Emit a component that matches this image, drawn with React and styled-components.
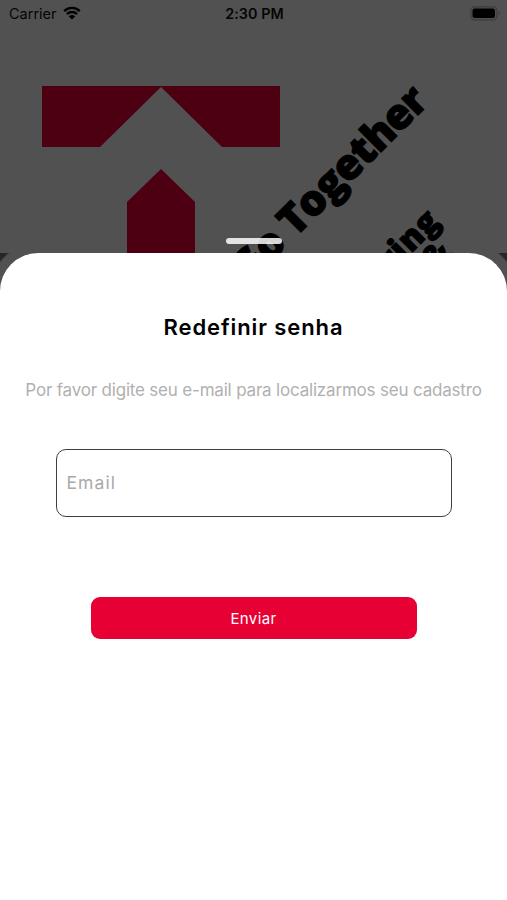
import React from 'react'
import styled, { createGlobalStyle } from 'styled-components'

const App = () => {
    return (
        <>
        <GlobalStyle/>
        <Screen>
            <Backdrop>
                <StatusBar>
                    <Carrier>
                        <StatusText $spacing='0'>Carrier</StatusText>
                        <WifiIcon/>
                    </Carrier>
                    <StatusText $bold $spacing='0.1px'>2:30 PM</StatusText>
                    <StatusRight><BatteryIcon/></StatusRight>
                </StatusBar>
                <Logo/>
                <Handle/>
            </Backdrop>
            <SheetWrapper>
                <Sheet>
                    <Title>Redefinir senha</Title>
                    <Description>Por favor digite seu e-mail para localizarmos seu cadastro</Description>
                    <EmailInput type='email' placeholder='Email'/>
                    <SendButton type='button'>Enviar</SendButton>
                </Sheet>
            </SheetWrapper>
        </Screen>
        </>
    )
}

const WifiIcon = () => (
    <svg width='18' height='14' viewBox='0 0 18 14'>
        <path d='M1.2 5.1 A11.2 11.2 0 0 1 16.8 5.1' fill='none' stroke='#000' strokeWidth='2.3'/>
        <path d='M3.9 8.1 A7.3 7.3 0 0 1 14.1 8.1' fill='none' stroke='#000' strokeWidth='2.3'/>
        <path d='M9 13.6 L5.9 10.4 A4.4 4.4 0 0 1 12.1 10.4 Z' fill='#000'/>
    </svg>
)

const BatteryIcon = () => (
    <svg width='31' height='15' viewBox='0 0 31 15'>
        <rect x='0.9' y='0.9' width='26' height='13' rx='3.6' fill='none' stroke='#3c3c3c' strokeWidth='1.1'/>
        <rect x='2.5' y='2.6' width='22.5' height='9.4' rx='2' fill='#000'/>
        <path d='M28.6 5 Q30.6 7.4 28.6 9.8 Z' fill='#3c3c3c'/>
    </svg>
)

const Logo = () => (
    <LogoSvg viewBox='0 28 507 262'>
        <path d='M42 86 H280 V147 H222 L161 87 L100 147 H42 Z' fill='#4e0013'/>
        <path d='M127 290 V202 L161 169 L195 202 V290 Z' fill='#4e0013'/>
        <LogoText transform='translate(429.5 103.5) rotate(-45)' $size={42} $spacing='-0.75px'>Go Together</LogoText>
        <LogoText transform='translate(441.5 223) rotate(-45)' $size={33} $spacing='0.6px'>Sharing</LogoText>
        <LogoText transform='translate(452 253.5) rotate(-45)' $size={31} $spacing='0'>&amp;</LogoText>
    </LogoSvg>
)

export default App

const GlobalStyle = createGlobalStyle`
* {
    box-sizing: border-box;
}

body {
    margin: 0;
    background: #515151;
}
`

const Screen = styled.div`
display: flex;
flex-direction: column;
width: 100%;
height: 900px;
overflow: hidden;
background: #515151;
font-family: Inter, 'Liberation Sans', sans-serif;
`

const Backdrop = styled.div`
position: relative;
height: 253px;
flex-shrink: 0;
overflow: hidden;
`

const StatusBar = styled.div`
display: grid;
grid-template-columns: 1fr auto 1fr;
align-items: center;
height: 28px;
padding: 0 7px 0 9px;
`

const Carrier = styled.div`
display: flex;
align-items: center;
gap: 6px;

svg {
    margin-top: -2px;
}
`

const StatusRight = styled.div`
display: flex;
justify-content: flex-end;
margin: -2px -1px 0 0;
`

const StatusText = styled.span`
font-size: ${({ $bold }) => ($bold ? 14.3 : 14.5)}px;
line-height: 28px;
font-weight: ${({ $bold }) => ($bold ? 600 : 400)};
letter-spacing: ${({ $spacing }) => $spacing};
color: #050505;
`

const LogoSvg = styled.svg`
display: block;
width: 507px;
height: 262px;
`

const LogoText = styled.text`
font-family: 'Open Sans', sans-serif;
font-size: ${({ $size }) => $size}px;
font-weight: 800;
letter-spacing: ${({ $spacing }) => $spacing};
text-anchor: end;
text-rendering: geometricPrecision;
fill: #000;
stroke: #000;
stroke-width: 1.2px;
`

/* drag handle floating over the backdrop */
const Handle = styled.div`
position: absolute;
left: 226px;
bottom: 9px;
width: 56px;
height: 6px;
border-radius: 3px;
background: rgba(255, 255, 255, 0.84);
`

const SheetWrapper = styled.div`
flex: 1;
background: radial-gradient(circle at 36px 36px, #515151 44px, transparent 46px) 0 0 / 36px 36px no-repeat,
    radial-gradient(circle at 0 36px, #515151 44px, transparent 46px) 100% 0 / 36px 36px no-repeat,
    #262626;
`

const Sheet = styled.div`
display: flex;
flex-direction: column;
align-items: center;
height: 100%;
padding-top: 59px;
border-radius: 38px 38px 0 0;
background: #fff;
`

const Title = styled.h1`
margin: 0;
font-size: 22px;
line-height: 30px;
font-weight: 600;
letter-spacing: 0.9px;
color: #000;
`

const Description = styled.p`
margin: 36px 0 0;
font-size: 17px;
line-height: 24px;
letter-spacing: -0.19px;
white-space: nowrap;
color: #b0b0b0;
`

const EmailInput = styled.input`
width: 396px;
height: 68px;
margin-top: 47px;
padding: 0 10px 2px;
border: 1.5px solid #3f3f42;
border-radius: 10px;
outline: none;
background: #fff;
font-family: inherit;
font-size: 17.5px;
letter-spacing: 1.1px;

&::placeholder {
    color: #a9a9a9;
    opacity: 1;
}
`

const SendButton = styled.button`
width: 326px;
height: 42px;
margin-top: 80px;
border: none;
border-radius: 9px;
background: #e60033;
font-family: inherit;
font-size: 15px;
letter-spacing: 0.4px;
color: #fff;
cursor: pointer;
`
